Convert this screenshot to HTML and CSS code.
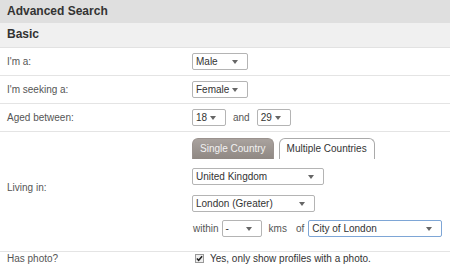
FILE: index.html
```html
<!DOCTYPE html>
<html lang="en">
<head>
    <meta charset="UTF-8">
    <title>Advanced Search</title>
    <link rel="stylesheet" href="styles.css">
</head>
<body>
    <div class="panel">
        <h1 class="panel-title">Advanced Search</h1>
        <h2 class="section-title">Basic</h2>

        <div class="row">
            <div class="label">I'm a:</div>
            <div class="field">
                <span class="select w-gender">Male<span class="caret"></span></span>
            </div>
        </div>

        <div class="row">
            <div class="label">I'm seeking a:</div>
            <div class="field">
                <span class="select w-gender">Female<span class="caret"></span></span>
            </div>
        </div>

        <div class="row">
            <div class="label">Aged between:</div>
            <div class="field inline">
                <span class="select w-age">18<span class="caret"></span></span>
                <span class="word">and</span>
                <span class="select w-age">29<span class="caret"></span></span>
            </div>
        </div>

        <div class="row row-location">
            <div class="label">Living in:</div>
            <div class="field stack">
                <div class="tabs">
                    <span class="tab active">Single Country</span>
                    <span class="tab">Multiple Countries</span>
                </div>
                <span class="select w-country">United Kingdom<span class="caret"></span></span>
                <span class="select w-region">London (Greater)<span class="caret"></span></span>
                <div class="inline">
                    <span class="word within">within</span>
                    <span class="select w-dist">-<span class="caret"></span></span>
                    <span class="word kms">kms</span>
                    <span class="word of">of</span>
                    <span class="select w-city focused">City of London<span class="caret"></span></span>
                </div>
            </div>
        </div>

        <div class="row row-last">
            <div class="label">Has photo?</div>
            <div class="field inline">
                <span class="checkbox">
                    <svg width="8" height="7" viewBox="0 0 8 7"><path d="M1 3.6 L3 5.6 L7 1" fill="none" stroke="#222" stroke-width="1.7"/></svg>
                </span>
                <span class="check-label">Yes, only show profiles with a photo.</span>
            </div>
        </div>
    </div>
</body>
</html>
```

FILE: styles.css
```css
body {
    margin: 0;
    font-family: Arial, "Liberation Sans", sans-serif;
    font-size: 10px;
    color: #444;
    background-color: white;
}
.panel {
    width: 450px;
}
.panel-title {
    margin: 0;
    height: 23px;
    line-height: 22px;
    padding: 0 7px;
    font-size: 12px;
    font-weight: bold;
    color: #333;
    background-color: #dfdfdf;
}
.section-title {
    margin: 0;
    height: 24px;
    line-height: 22px;
    padding: 0 7px;
    font-size: 12px;
    font-weight: bold;
    color: #333;
    background-color: #f0f0f0;
    border-bottom: 1px solid #e2e2e2;
}
.row {
    display: flex;
    align-items: center;
    padding: 5px 7px 5px 7px;
    border-bottom: 1px solid #e4e4e4;
}
.row-location {
    padding-top: 6px;
    padding-bottom: 14px;
}
.row-last {
    border-bottom: none;
    padding-top: 1px;
}
.label {
    width: 185px;
    flex-shrink: 0;
    color: #555;
}
.field {
    display: flex;
}
.inline {
    display: flex;
    align-items: center;
}
.stack {
    flex-direction: column;
    align-items: flex-start;
}
.select {
    position: relative;
    display: inline-block;
    box-sizing: border-box;
    height: 17px;
    line-height: 15px;
    padding: 0 14px 0 3px;
    border: 1px solid #b4b4b4;
    border-radius: 2px;
    color: #333;
    background-color: white;
    white-space: nowrap;
}
.select.focused {
    border-color: #7ea6d6;
}
.caret {
    position: absolute;
    right: 9px;
    top: 6px;
    width: 0;
    height: 0;
    border-left: 3.5px solid transparent;
    border-right: 3.5px solid transparent;
    border-top: 4px solid #666;
}
.w-gender { width: 56px; }
.w-age { width: 34px; }
.w-country { width: 132px; margin-top: 9px; }
.w-region { width: 123px; margin-top: 10px; }
.w-dist { width: 40px; }
.w-city { width: 134px; }
.stack .inline {
    margin-top: 8px;
}
.word {
    margin: 0 7px;
    color: #555;
}
.within {
    margin: 0 3px 0 1px;
}
.kms {
    margin: 0 9px 0 7px;
}
.of {
    margin: 0 4px 0 0;
}
.tabs {
    display: flex;
    gap: 5px;
}
.tab {
    box-sizing: border-box;
    height: 21px;
    line-height: 20px;
    padding: 0 7px;
    font-size: 10px;
    border: 1px solid #aaa;
    border-bottom: none;
    border-radius: 6px 6px 0 0;
    color: #333;
    background-color: white;
}
.tab.active {
    color: #f2f2f2;
    border-color: #9a928e;
    background: linear-gradient(#a9a29e, #8f8883);
}
.checkbox {
    display: inline-flex;
    align-items: center;
    justify-content: center;
    box-sizing: border-box;
    width: 9px;
    height: 9px;
    margin-left: 3px;
    border: 1px solid #999;
    background-color: #eee;
}
.check-label {
    margin-left: 6px;
    color: #333;
}
```
